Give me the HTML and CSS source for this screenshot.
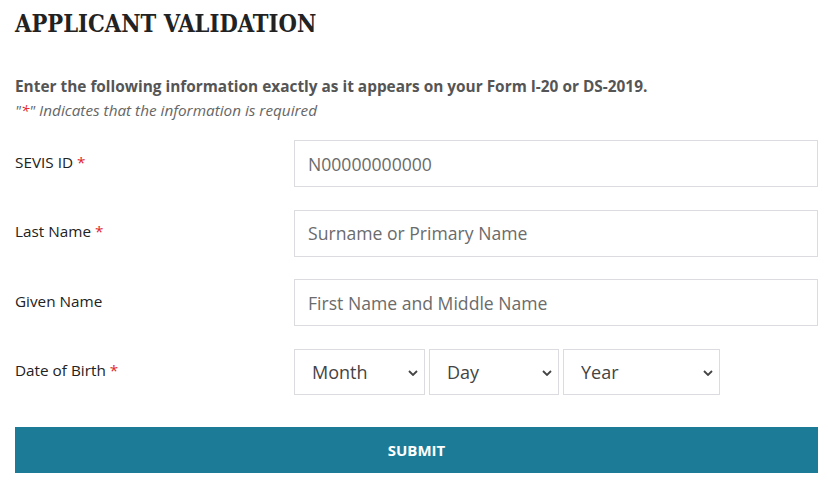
FILE: index.html
```html
<!DOCTYPE html>
<html lang="en">
<head>
<meta charset="utf-8">
<title>Applicant Validation</title>
<link rel="stylesheet" href="styles.css">
</head>
<body>
<main class="page">
  <h1 class="title">APPLICANT VALIDATION</h1>
  <p class="intro">Enter the following information exactly as it appears on your Form I-20 or DS-2019.</p>
  <p class="note">"<span class="req">*</span>" Indicates that the information is required</p>
  <form class="form">
    <div class="row">
      <label class="label">SEVIS ID <span class="req">*</span></label>
      <input class="input" type="text" placeholder="N00000000000">
    </div>
    <div class="row">
      <label class="label">Last Name <span class="req">*</span></label>
      <input class="input" type="text" placeholder="Surname or Primary Name">
    </div>
    <div class="row">
      <label class="label">Given Name</label>
      <input class="input" type="text" placeholder="First Name and Middle Name">
    </div>
    <div class="row">
      <label class="label">Date of Birth <span class="req">*</span></label>
      <div class="dob">
        <div class="sel sel-month">
          <select class="select"><option>Month</option></select>
          <svg class="chev" viewBox="0 0 10 6" width="10" height="6"><path d="M1 1l4 4 4-4" fill="none" stroke="#444" stroke-width="1.8"/></svg>
        </div>
        <div class="sel sel-day">
          <select class="select"><option>Day</option></select>
          <svg class="chev" viewBox="0 0 10 6" width="10" height="6"><path d="M1 1l4 4 4-4" fill="none" stroke="#444" stroke-width="1.8"/></svg>
        </div>
        <div class="sel sel-year">
          <select class="select"><option>Year</option></select>
          <svg class="chev" viewBox="0 0 10 6" width="10" height="6"><path d="M1 1l4 4 4-4" fill="none" stroke="#444" stroke-width="1.8"/></svg>
        </div>
      </div>
    </div>
    <button class="submit" type="button">SUBMIT</button>
  </form>
</main>
</body>
</html>
```
FILE: styles.css
```css
* { box-sizing: border-box; }
html, body { margin: 0; padding: 0; background: #fff; }
body { font-family: "Open Sans", "Liberation Sans", sans-serif; color: #333; }
.page { padding: 8px 10px 0 15px; }
.title {
  font-family: "DejaVu Serif Condensed", "DejaVu Serif", serif;
  font-stretch: condensed;
  font-weight: bold;
  font-size: 23.5px;
  color: #222;
  margin: 0;
  line-height: 32px;
}
.intro {
  margin: 36px 0 0;
  font-size: 15.4px;
  font-weight: bold;
  color: #555;
  line-height: 21px;
}
.note {
  margin: 3px 0 0;
  font-size: 15.3px;
  font-style: italic;
  color: #666;
  line-height: 21px;
}
.req { color: #e0262b; font-style: normal; }
.note .req { font-style: italic; }
.form { margin-top: 19px; display: flex; flex-direction: column; }
.row { display: flex; align-items: center; height: 47px; margin-bottom: 22.5px; }
.label { width: 279px; flex: none; font-size: 15.3px; color: #222; padding-bottom: 4px; }
.input {
  flex: 1;
  height: 47px;
  border: 1px solid #dcdce0;
  padding: 0 13px;
  font-family: "Open Sans", sans-serif;
  font-size: 17.6px;
  color: #333;
  outline: none;
}
.input::placeholder { color: #6b6b6b; }
.dob { display: flex; gap: 4px; height: 47px; }
.sel { position: relative; height: 46px; }
.sel-month { width: 131px; }
.sel-day { width: 130px; }
.sel-year { width: 157px; }
.select {
  appearance: none;
  -webkit-appearance: none;
  width: 100%;
  height: 100%;
  border: 1px solid #dcdce0;
  border-radius: 0;
  background: #fff;
  padding: 0 0 0 17px;
  font-family: "Open Sans", sans-serif;
  font-size: 18px;
  color: #444;
}
.chev { position: absolute; right: 7px; top: 21px; pointer-events: none; }
.submit {
  margin-top: 8.5px;
  height: 46px;
  width: 100%;
  border: none;
  background: #1c7c98;
  color: #fff;
  font-family: "Open Sans", sans-serif;
  font-weight: bold;
  font-size: 15px;
}
```
